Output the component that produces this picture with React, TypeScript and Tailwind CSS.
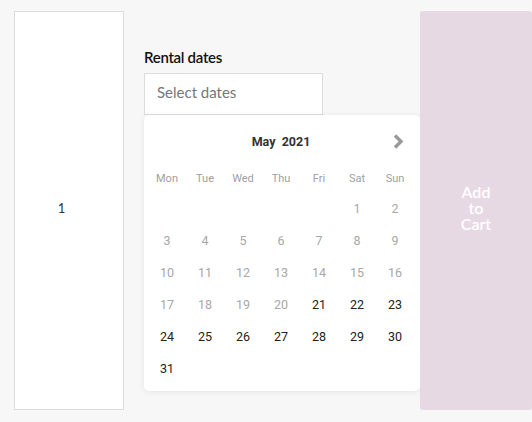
const weekdays = ["Mon", "Tue", "Wed", "Thu", "Fri", "Sat", "Sun"];

// May 2021 starts on a Saturday, 5 blanks before day 1
const days: (number | null)[] = [
  null,
  null,
  null,
  null,
  null,
  ...Array.from({ length: 31 }, (_, i) => i + 1),
];

const firstAvailable = 21;

function Calendar() {
  return (
    <div className="bg-white rounded-[5px] shadow-[0_1px_6px_rgba(0,0,0,0.08)] pl-[4px] pr-[6px] pb-[6px] w-[276px]">
      {/* Header */}
      <div className="relative h-[54px] flex items-center justify-center">
        <span
          className="text-[12.5px] font-bold text-[#333]"
          style={{ fontFamily: "Roboto, sans-serif" }}
        >
          May&nbsp;&nbsp;2021
        </span>
        <svg
          className="absolute right-[10px] top-[19px]"
          width="11"
          height="15"
          viewBox="0 0 11 15"
        >
          <polyline
            points="2,1.5 8,7.5 2,13.5"
            fill="none"
            stroke="#999"
            strokeWidth="3.4"
          />
        </svg>
      </div>

      <div
        className="grid grid-cols-[repeat(7,38px)] h-[18px] mt-[1px] items-center text-[11px] text-[#a0a0a0]"
        style={{ fontFamily: "Roboto, sans-serif" }}
      >
        {weekdays.map((d) => (
          <div key={d} className="text-center">
            {d}
          </div>
        ))}
      </div>

      <div
        className="grid grid-cols-[repeat(7,38px)] auto-rows-[32px] mt-[5px] text-[12.5px]"
        style={{ fontFamily: "Roboto, sans-serif" }}
      >
        {days.map((d, i) => (
          <div
            key={i}
            className={
              "flex items-center justify-center " +
              (d !== null && d < firstAvailable ? "text-[#a8a8a8]" : "text-[#222]")
            }
          >
            {d}
          </div>
        ))}
      </div>
    </div>
  );
}

export default function App() {
  return (
    <div
      className="w-[532px] h-[422px] bg-[#f7f7f7] overflow-hidden flex pl-[14px] pt-[11px]"
      style={{ fontFamily: "Lato, sans-serif" }}
    >
      {/* Quantity box */}
      <div className="w-[110px] h-[399px] bg-white border border-[#dcdcdc] flex items-center justify-center pr-[15px] pb-[3px]">
        <span className="text-[13px] text-[#333]">1</span>
      </div>

      {/* Dates */}
      <div className="ml-[20px] w-[276px] flex flex-col pt-[36px]">
        <label className="text-[15px] font-semibold text-[#111] leading-[20px] tracking-[-0.3px]">
          Rental dates
        </label>
        <div className="mt-[6px] w-[179px] h-[42px] bg-white border border-[#dcdcdc] flex items-center pl-[12px] pb-[3px]">
          <span className="text-[15px] text-[#777]">Select dates</span>
        </div>
        <Calendar />
      </div>

      {/* Add to cart */}
      <button className="w-[112px] shrink-0 h-[399px] bg-[#e7d9e4] rounded-[3px] flex items-center justify-center pb-[6px]">
        <span className="w-min text-center text-[16px] font-semibold leading-[16px] text-white">
          Add to Cart
        </span>
      </button>
    </div>
  );
}
